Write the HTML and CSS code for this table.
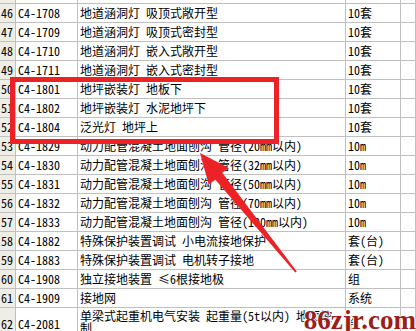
FILE: index.html
```html
<!DOCTYPE html>
<html lang="zh-CN">
<head>
<meta charset="utf-8">
<title>定额表</title>
<link rel="stylesheet" href="styles.css">
</head>
<body>
<div class="sheet">
  <div class="row"><div class="num"></div><div></div><div></div><div></div><div></div></div>
  <div class="row"><div class="num">46</div><div>C4-1708</div><div>地道涵洞灯 吸顶式敞开型</div><div>10套</div><div></div></div>
  <div class="row"><div class="num">47</div><div>C4-1709</div><div>地道涵洞灯 吸顶式密封型</div><div>10套</div><div></div></div>
  <div class="row"><div class="num">48</div><div>C4-1710</div><div>地道涵洞灯 嵌入式敞开型</div><div>10套</div><div></div></div>
  <div class="row"><div class="num">49</div><div>C4-1711</div><div>地道涵洞灯 嵌入式密封型</div><div>10套</div><div></div></div>
  <div class="row"><div class="num">50</div><div>C4-1801</div><div>地坪嵌装灯 地板下</div><div>10套</div><div></div></div>
  <div class="row"><div class="num">51</div><div>C4-1802</div><div>地坪嵌装灯 水泥地坪下</div><div>10套</div><div></div></div>
  <div class="row"><div class="num">52</div><div>C4-1804</div><div>泛光灯 地坪上</div><div>10套</div><div></div></div>
  <div class="row"><div class="num">53</div><div>C4-1829</div><div>动力配管混凝土地面刨沟 管径(20mm以内)</div><div>10m</div><div></div></div>
  <div class="row"><div class="num">54</div><div>C4-1830</div><div>动力配管混凝土地面刨沟 管径(32mm以内)</div><div>10m</div><div></div></div>
  <div class="row"><div class="num">55</div><div>C4-1831</div><div>动力配管混凝土地面刨沟 管径(50mm以内)</div><div>10m</div><div></div></div>
  <div class="row"><div class="num">56</div><div>C4-1832</div><div>动力配管混凝土地面刨沟 管径(70mm以内)</div><div>10m</div><div></div></div>
  <div class="row"><div class="num">57</div><div>C4-1833</div><div>动力配管混凝土地面刨沟 管径(100mm以内)</div><div>10m</div><div></div></div>
  <div class="row"><div class="num">58</div><div>C4-1882</div><div>特殊保护装置调试 小电流接地保护</div><div>套(台)</div><div></div></div>
  <div class="row"><div class="num">59</div><div>C4-1883</div><div>特殊保护装置调试 电机转子接地</div><div>套(台)</div><div></div></div>
  <div class="row"><div class="num">60</div><div>C4-1908</div><div>独立接地装置 ≤6根接地极</div><div>组</div><div></div></div>
  <div class="row"><div class="num">61</div><div>C4-1909</div><div>接地网</div><div>系统</div><div></div></div>
  <div class="row tall"><div class="num">62</div><div>C4-2081</div><div class="wrap">单梁式起重机电气安装 起重量(5t以内) 地面控<br>制</div><div>台</div><div></div></div>
</div>
<svg class="marks" width="416" height="331" viewBox="0 0 416 331">
  <rect x="12.5" y="79.5" width="264" height="62" fill="none" stroke="#ec2227" stroke-width="5"/>
  <polygon fill="#ec2227" points="200,153 228.9,168.1 222.2,172.8 296.8,271.4 295.2,272.6 215.4,179.8 208.7,184.5"/>
</svg>
<div class="watermark">86zjr.com</div>
</body>
</html>
```
FILE: styles.css
```css
* { box-sizing: border-box; margin: 0; padding: 0; }
html, body { width: 416px; height: 331px; overflow: hidden; background: #fff; }
body {
  position: relative;
  font-family: "Noto Sans Mono CJK SC", "Noto Sans CJK SC", monospace;
  font-size: 12px;
  color: #000;
}
.sheet { margin-top: -15px; }
.row {
  display: grid;
  grid-template-columns: 16px 62px 268px 55px 1fr;
  height: 19px;
}
.row > div {
  border-right: 1px solid #c0c0c0;
  border-bottom: 1px solid #c0c0c0;
  line-height: 18px;
  white-space: nowrap;
  overflow: hidden;
  padding-left: 2px;
  background: #fff;
}
.row > .num { background: #eeede6; padding-left: 1px; }
.row.tall { height: 30px; }
.row.tall > div { line-height: 12px; padding-top: 10px; }
.row.tall > .wrap { padding-top: 2px; }
.marks { position: absolute; left: 0; top: 0; pointer-events: none; }
.watermark {
  position: absolute;
  right: 0;
  bottom: -5px;
  font-family: "Liberation Serif", serif;
  font-weight: bold;
  font-size: 27px;
  color: #9a1e1a;
  text-shadow: 1px 0 #fff, -1px 0 #fff, 0 1px #fff, 0 -1px #fff;
}
```
